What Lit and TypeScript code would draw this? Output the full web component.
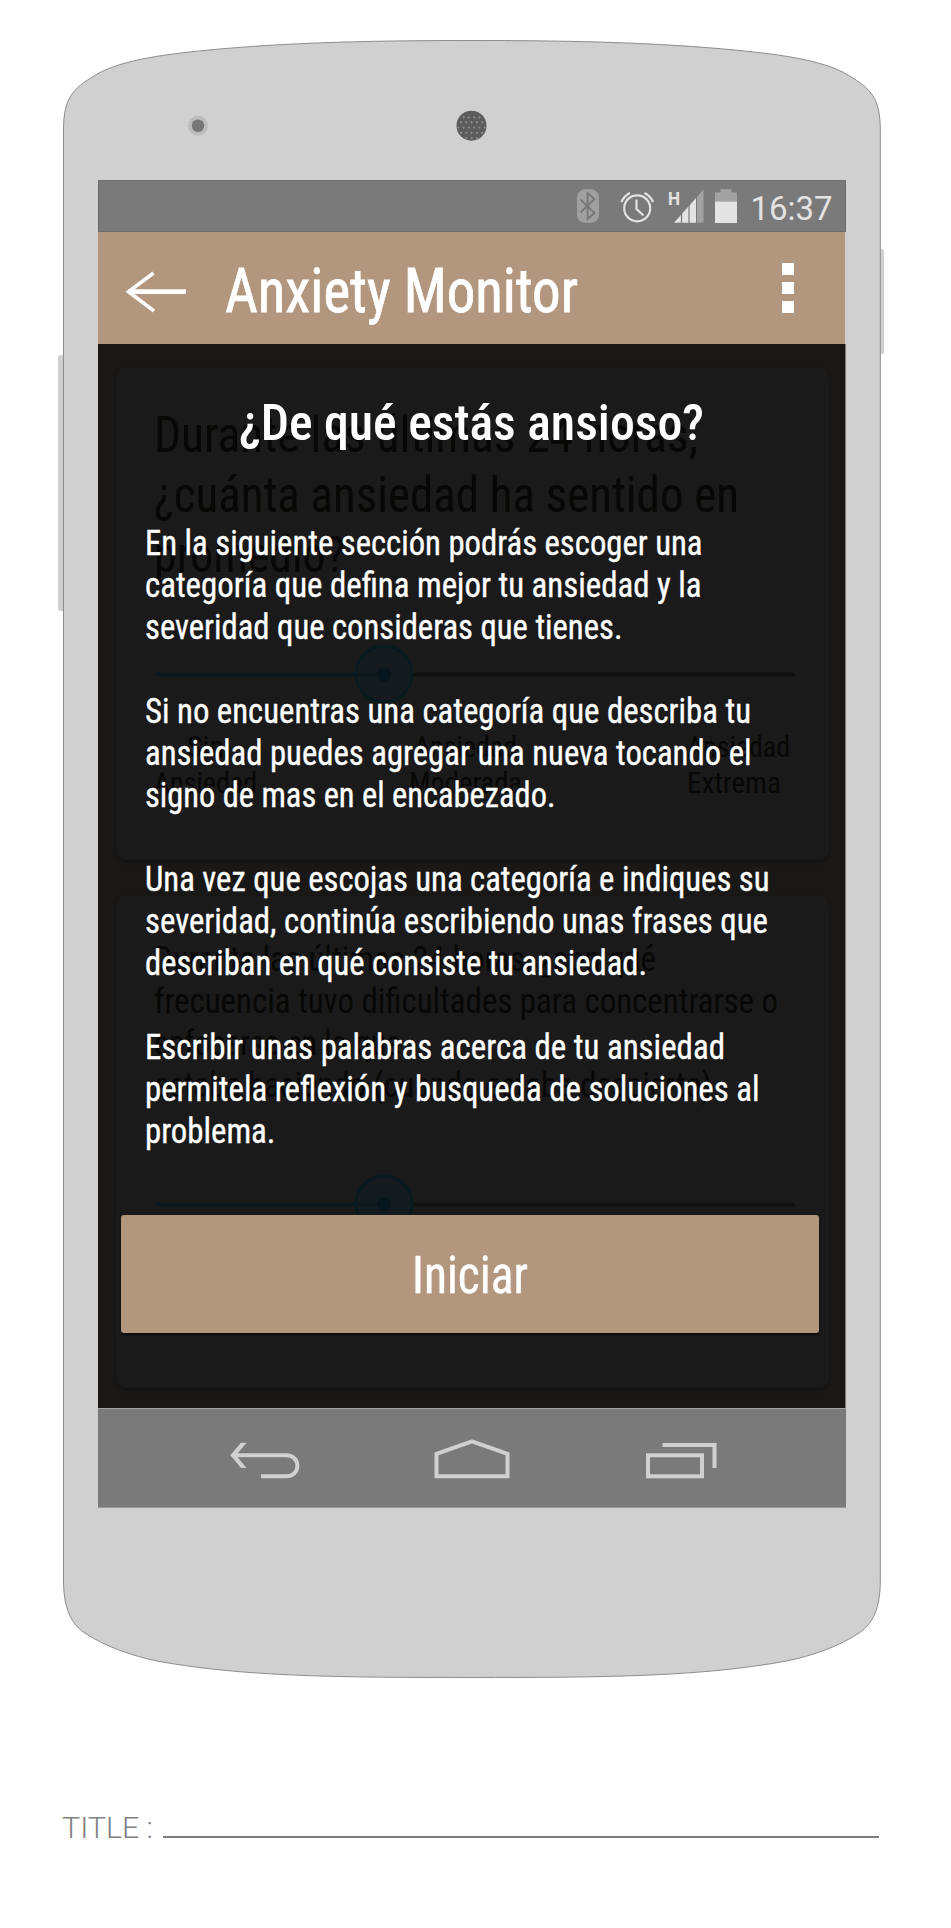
import { LitElement, html, css, svg } from "lit";
import { customElement } from "lit/decorators.js";

interface Line { t: string; w: number; }

const intro: Line[][] = [
  [
    { t: "En la siguiente sección podrás escoger una", w: 557.5 },
    { t: "categoría que defina mejor tu ansiedad y la", w: 556.5 },
    { t: "severidad que consideras que tienes.", w: 477.5 },
  ],
  [
    { t: "Si no encuentras una categoría que describa tu", w: 606 },
    { t: "ansiedad puedes agregar una nueva tocando el", w: 606.5 },
    { t: "signo de mas en el encabezado.", w: 410.5 },
  ],
  [
    { t: "Una vez que escojas una categoría e indiques su", w: 624.5 },
    { t: "severidad, continúa escribiendo unas frases que", w: 623 },
    { t: "describan en qué consiste tu ansiedad.", w: 502 },
  ],
  [
    { t: "Escribir unas palabras acerca de tu ansiedad", w: 580 },
    { t: "permitela reflexión y busqueda de soluciones al", w: 614.5 },
    { t: "problema.", w: 130.5 },
  ],
];

/** One line of condensed text, set to an exact advance width. */
const line = (t: string, w: number, h: number, base: number, cls = "") => html`
  <svg class="line ${cls}" width=${w} height=${h}>
    <text x="0" y=${base} textLength=${w} lengthAdjust="spacingAndGlyphs">${t}</text>
  </svg>`;

const slider = html`
  <svg class="slider" width="642" height="60" viewBox="155 0 642 60">
    <path d="M157 30.4H357" stroke="#09181f" stroke-width="4" />
    <path d="M414 30.4H796" stroke="#0f0f0f" stroke-width="3.5" />
    <circle cx="385" cy="30" r="28" fill="#131b1e" stroke="#071a20" stroke-width="2.6" />
    <path d="M357 30.4H385" stroke="#0b171d" stroke-width="3" />
    <circle cx="385" cy="30.4" r="7" fill="#06161c" />
  </svg>`;

@customElement("app-root")
export class AppRoot extends LitElement {
  static styles = css`
    :host { display: block; width: 951px; height: 1928px; background: #fff;
      font-family: "Roboto Condensed", Roboto, "Liberation Sans", sans-serif; }
    svg { display: block; overflow: visible; flex: none; }
    .page { display: flex; flex-direction: column; height: 1928px; }
    .phone { display: grid; width: 951px; height: 1700px; }
    .frame, .face { grid-area: 1 / 1; }
    .face { padding: 180px 0 0 98px; }
    .screen { width: 747px; display: flex; flex-direction: column; }
    .status { height: 52px; box-sizing: border-box; background: #7a7a7a; border: 1px solid #6c6c6c;
      border-top-color: #727272; margin-right: -1px; }
    .status svg { margin: -1px 0 0 -1px; }
    .clock { font: 400 34px Roboto, sans-serif; fill: #e3e3e3; }
    .net { font: 700 18px Roboto, sans-serif; fill: #e3e3e3; }
    .bar { height: 112px; background: #b2977e; display: flex; align-items: center; padding: 0 51px 0 28px; }
    .bar .back { margin-top: 8px; }
    .bar .heading { margin-left: 39px; }
    .bar .dots { margin-left: auto; display: grid; gap: 7px; }
    .bar .dots i { width: 12px; height: 12px; background: #fff; }
    .line { font-stretch: 75%; font-weight: 400; fill: #fff; }
    .heading { font-size: 60.5px; stroke: #fff; stroke-width: 0.8px; }
    .body { height: 1064px; display: grid; background: #191816; border-right: 1px solid #7a7a7a;
      margin-right: -1px; overflow: hidden; }
    .cards, .overlay { grid-area: 1 / 1; min-width: 0; }
    .cards { padding: 24px 16px 0 18px; display: flex; flex-direction: column; gap: 36px; }
    .card { height: 492px; box-sizing: border-box; border-radius: 10px; background: #1a1a1a;
      box-shadow: 0 2px 3px #141312; padding-left: 38px; }
    .q1 { padding-top: 36px; }
    .q2 { padding-top: 39px; }
    .ghost { fill: #070706; }
    .ghost.lg { font-size: 50.5px; }
    .ghost.md { font-size: 35.5px; }
    .ghost.sm { font-size: 29.5px; }
    .q1 .slider { margin: 60px 0 23px; }
    .q2 .slider { margin-top: 71px; }
    .slider { margin-left: 0; }
    .scale { display: grid; grid-template-columns: 255px 278px 110px; }
    .scale .sin { margin-left: 33px; }
    .scale .mid { margin-left: 5px; }
    .overlay { display: flex; flex-direction: column; }
    .title { font-size: 50.5px; font-weight: 500; margin: 44px 0 0 141px; }
    .copy { margin: 60px 0 0 46.5px; display: flex; flex-direction: column; gap: 42px; }
    .copy .line { font-size: 35.3px; stroke: #fff; stroke-width: 0.35px; }
    .start { appearance: none; border: 0; width: 698px; height: 118px; margin: 72px 0 0 23px; padding: 0;
      border-radius: 3px; background: #b2977e; box-shadow: 0 2px 2px #0c0b0a; font-family: inherit;
      display: flex; align-items: center; justify-content: center; }
    .start .line { font-size: 51px; stroke: #fff; stroke-width: 0.4px; }
    .nav { height: 100px; box-sizing: border-box; background: #7a7a7a; border-top: 1px solid #a5a5a5;
      border-bottom: 1px solid #9a9a9a; margin-right: -1px; }
    .caption { display: flex; align-items: flex-end; padding: 107px 72px 0 62px; }
    .caption .name { font: 300 30px Roboto, sans-serif; fill: #808080; }
    .rule { flex: 1; height: 2px; background: #7c7c7c; margin: 0 0 1px 9px; }
  `;

  private frame() {
    const holes = [];
    for (const [y, n] of [[117.4, 4], [122.4, 5], [127.6, 6], [132.8, 5], [138, 3]]) {
      for (let i = 0; i < n; i++) {
        holes.push(svg`<circle cx=${471.6 + (i - (n - 1) / 2) * 5.3} cy=${y} r="1.1" fill="#8e8e8e" />`);
      }
    }
    return html`
      <svg class="frame" width="951" height="1700" viewBox="0 0 951 1700">
        <path d="M64 355H60q-2 0-2 2V609q0 2 2 2h4zM880 249h2q2 0 2 2V352q0 2-2 2h-2z" fill="#d0d0d0" />
        <path d="M63.5 130C63.5 95 75 87 100 72.500C130 57 183 52.500 223 48.700C300 42 383 40.500 471.800 40.500C560 40.500 643.600 42 720.600 48.700C760.600 52.500 813.600 57 843.600 72.500C868.600 87 880.300 95 880.300 130V1580C880.300 1602 876 1622 859 1633C838 1647 811 1656 786.600 1661C700 1677 600 1677.500 471.900 1677.500C343 1677.500 243 1677 157 1661C133 1656 106 1647 84.800 1633C68 1622 63.500 1602 63.500 1580Z"
          fill="#d0d0d0" stroke="#8d8d8d" />
        <circle cx="198" cy="125.700" r="10" fill="#bdbdbd" />
        <circle cx="198" cy="125.700" r="6.300" fill="#777" />
        <circle cx="471.500" cy="125.700" r="15" fill="#5c5c5c" />
        ${holes}
      </svg>`;
  }

  private statusIcons() {
    return html`
      <svg width="748" height="52" viewBox="98 180 748 52">
        <rect x="577" y="189.300" width="22" height="33.500" rx="8" fill="#a0a0a0" />
        <path d="M580.500 199.500L594.500 213L587.600 219V193L594.500 199L580.500 212.500" fill="none" stroke="#777" stroke-width="1.800" />
        <g fill="none" stroke="#e3e3e3" stroke-width="2.200">
          <circle cx="637.200" cy="208.300" r="13" />
          <path d="M636.500 199.500V209L643.500 215.500" />
          <path d="M621.500 202Q624 196 630 193M653 202Q650.500 196 644.500 193" />
        </g>
        <text class="net" x="668" y="205" textLength="12" lengthAdjust="spacingAndGlyphs">H</text>
        <path d="M674 222.700L696 198V222.700Z" fill="#e3e3e3" />
        <path d="M697 222.700V197L703.500 189.300V222.700Z" fill="#a2a2a2" />
        <path d="M681.500 212V223M689 204V223" stroke="#7a7a7a" stroke-width="1.200" />
        <path d="M715 201.500V192.500H720.500V189.300H731.500V192.500H737V201.500Z" fill="#a2a2a2" />
        <rect x="715" y="201.500" width="22" height="21.500" fill="#e3e3e3" />
        <text class="clock" x="750.500" y="219.500" textLength="82" lengthAdjust="spacingAndGlyphs">16:37</text>
      </svg>`;
  }

  private navIcons() {
    return html`
      <svg width="748" height="98" viewBox="98 1409 748 98">
        <g fill="none" stroke="#d0d0d0" stroke-width="4">
          <path d="M235 1455.300H286.500C301 1455.300 301 1476.300 286.500 1476.300H261" />
          <path d="M436.500 1453.800L472 1441.300L507.500 1453.800V1476.300H436.500Z" />
          <rect x="648" y="1455.300" width="54" height="21" />
          <path d="M662.500 1445H714.500V1468" />
        </g>
        <path d="M241 1442.700H246.500L236 1455.300L246.500 1468H241L230.300 1455.300Z" fill="#d0d0d0" />
      </svg>`;
  }

  render() {
    return html`
      <div class="page">
        <div class="phone">
          ${this.frame()}
          <div class="face">
            <div class="screen">
              <div class="status">${this.statusIcons()}</div>
              <header class="bar">
                <svg class="back" width="60" height="42" viewBox="126 271 60 42">
                  <path d="M128 291.700H186" stroke="#fff" stroke-width="4.800" />
                  <path d="M153.500 273L128.500 291.700L154 311" fill="none" stroke="#fff" stroke-width="3.600" />
                </svg>
                ${line("Anxiety Monitor", 353, 72, 60, "heading")}
                <div class="dots"><i></i><i></i><i></i></div>
              </header>
              <div class="body">
                <div class="cards">
                  <section class="card q1">
                    ${line("Durante las últimas 24 horas,", 544, 60, 48, "ghost lg")}
                    ${line("¿cuánta ansiedad ha sentido en", 585, 60, 48, "ghost lg")}
                    ${line("promedio?", 191, 60, 48, "ghost lg")}
                    ${slider}
                    <div class="scale">
                      <div class="sin">${line("Sin", 37, 36, 30, "ghost sm")}</div>
                      <div class="mid">${line("Ansiedad", 103, 36, 30, "ghost sm")}</div>
                      ${line("Ansiedad", 103, 36, 30, "ghost sm")}
                      ${line("Ansiedad", 103, 36, 30, "ghost sm")}
                      ${line("Moderada", 113, 36, 30, "ghost sm")}
                      ${line("Extrema", 94, 36, 30, "ghost sm")}
                    </div>
                  </section>
                  <section class="card q2">
                    ${line("Durante las últimas 24 horas, ¿con qué", 502, 42, 35.7, "ghost md")}
                    ${line("frecuencia tuvo dificultades para concentrarse o", 624, 42, 35.7, "ghost md")}
                    ${line("enfocarse en lo que", 247, 42, 35.7, "ghost md")}
                    ${line("estaba haciendo (cuando estaba despierto)", 558, 42, 35.7, "ghost md")}
                    ${slider}
                  </section>
                </div>
                <div class="overlay">
                  ${line("¿De qué estás ansioso?", 465, 65, 52, "title")}
                  <div class="copy">
                    ${intro.map((p) => html`<div>${p.map((l) => line(l.t, l.w, 42, 42))}</div>`)}
                  </div>
                  <button class="start">${line("Iniciar", 116, 60, 48.500)}</button>
                </div>
              </div>
              <nav class="nav">${this.navIcons()}</nav>
            </div>
          </div>
        </div>
        <div class="caption">
          <svg width="92" height="32"><text class="name" x="0" y="31" textLength="91" lengthAdjust="spacingAndGlyphs">TITLE :</text></svg>
          <div class="rule"></div>
        </div>
      </div>`;
  }
}
